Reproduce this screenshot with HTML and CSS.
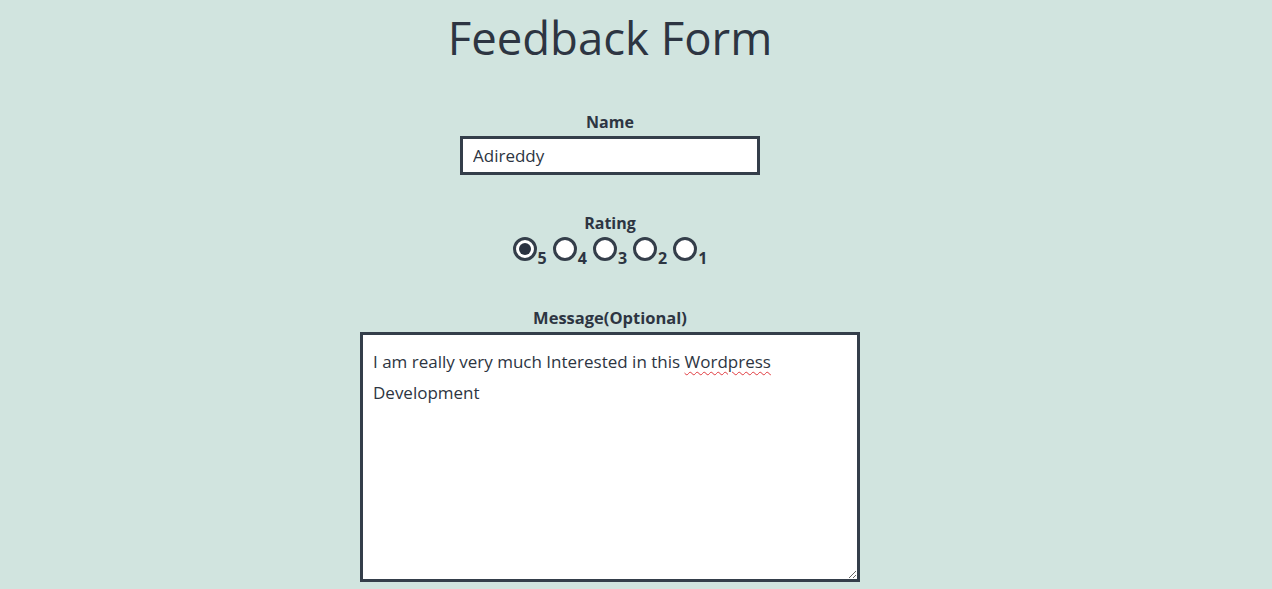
FILE: index.html
```html
<!DOCTYPE html>
<html lang="en">
<head>
<meta charset="utf-8">
<title>Feedback Form</title>
<link rel="stylesheet" href="styles.css">
</head>
<body>
<main class="page">
  <h1 class="title">Feedback Form</h1>
  <form class="form">
    <div class="field">
      <label class="label" for="name">Name</label>
      <input class="text-input" id="name" type="text" value="Adireddy">
    </div>
    <div class="field field-rating">
      <span class="label">Rating</span>
      <div class="ratings">
        <label class="rate"><input type="radio" name="rating" value="5" checked><span class="num">5</span></label>
        <label class="rate"><input type="radio" name="rating" value="4"><span class="num">4</span></label>
        <label class="rate"><input type="radio" name="rating" value="3"><span class="num">3</span></label>
        <label class="rate"><input type="radio" name="rating" value="2"><span class="num">2</span></label>
        <label class="rate"><input type="radio" name="rating" value="1"><span class="num">1</span></label>
      </div>
    </div>
    <div class="field field-message">
      <span class="label">Message(Optional)</span>
      <div class="message" contenteditable="true" spellcheck="false">I am really very much Interested in this <span class="misspelled">Wordpress</span> Development</div>
    </div>
  </form>
</main>
</body>
</html>
```

FILE: styles.css
```css
html, body {
  margin: 0;
  padding: 0;
}
body {
  background: #d1e4df;
  color: #2d3542;
  font-family: "Open Sans", "Noto Sans", sans-serif;
}
.page {
  width: 1220px;
  display: flex;
  flex-direction: column;
  align-items: center;
}
.title {
  margin: 7px 0 0;
  font-size: 45.5px;
  font-weight: 400;
  line-height: 60px;
}
.form {
  display: flex;
  flex-direction: column;
  align-items: center;
  margin-top: 44px;
}
.field {
  display: flex;
  flex-direction: column;
  align-items: center;
}
.label {
  font-size: 16px;
  font-weight: 700;
  line-height: 22px;
}
.field-message .label {
  font-size: 16.5px;
}
.text-input {
  margin-top: 3px;
  width: 300px;
  height: 39px;
  box-sizing: border-box;
  border: 3px solid #343e4a;
  background: #fff;
  padding: 0 10px;
  font: 400 17px "Open Sans", sans-serif;
  color: #2d3542;
  outline: none;
}
.field-rating {
  margin-top: 37px;
}
.ratings {
  display: flex;
  gap: 6px;
  margin-top: 3px;
}
.rate {
  display: flex;
  align-items: flex-end;
}
.rate input {
  appearance: none;
  -webkit-appearance: none;
  margin: 0;
  width: 24px;
  height: 24px;
  box-sizing: border-box;
  border: 3px solid #343e4a;
  border-radius: 50%;
  background: #fff;
  position: relative;
}
.rate input:checked::after {
  content: "";
  position: absolute;
  inset: 3px;
  border-radius: 50%;
  background: #2a3240;
}
.num {
  font-size: 16px;
  font-weight: 700;
  line-height: 16px;
  margin-left: 1px;
  margin-bottom: -5px;
}
.field-message {
  margin-top: 46px;
}
.message {
  margin-top: 3px;
  width: 500px;
  height: 250px;
  box-sizing: border-box;
  border: 3px solid #343e4a;
  background: #fff;
  padding: 11px 10px;
  font-size: 17px;
  line-height: 31px;
  color: #2d3542;
  overflow: auto;
  resize: both;
  outline: none;
}
.misspelled {
  text-decoration: underline wavy #e0393e;
  text-decoration-thickness: 1px;
  text-underline-offset: 3px;
}
```
